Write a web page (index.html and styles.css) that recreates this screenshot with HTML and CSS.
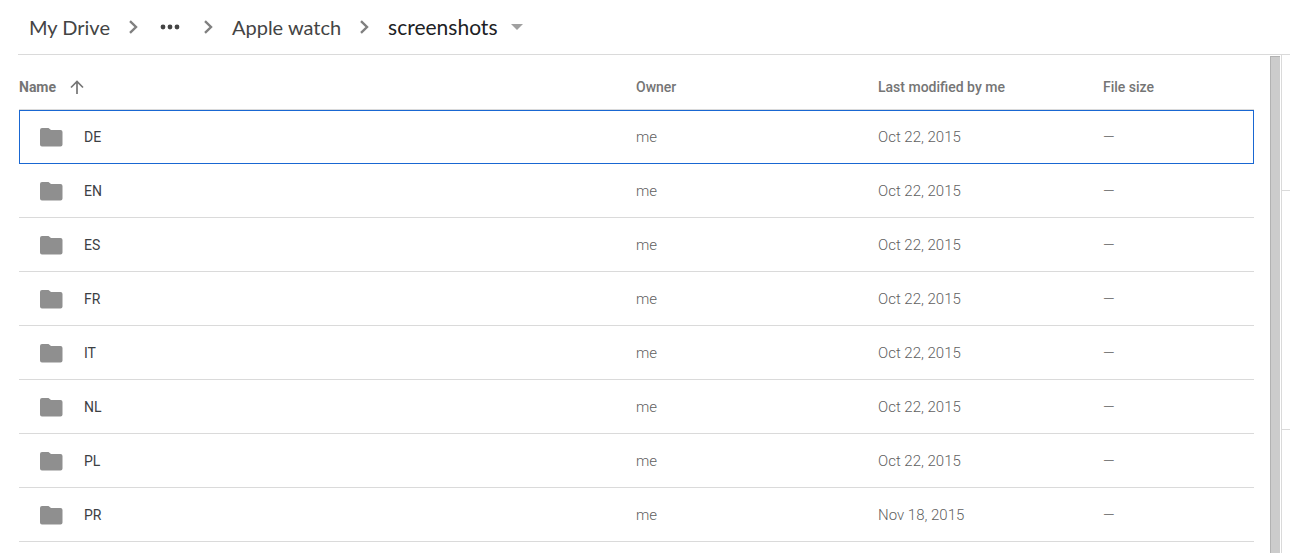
FILE: index.html
```
<!DOCTYPE html>
<html lang="en">
<head>
<meta charset="utf-8">
<title>screenshots - My Drive</title>
<link rel="stylesheet" href="styles.css">
</head>
<body>
<svg class="defs" aria-hidden="true">
  <symbol id="chevron" viewBox="0 0 10 14"><path d="M1 1.200L7 7L1 12.800" fill="none" stroke="currentColor" stroke-width="2.400"/></symbol>
  <symbol id="folder" viewBox="0 0 24 20"><path d="M3 1h6.500l2.500 2h9.500a2 2 0 0 1 2 2v12.500a2 2 0 0 1-2 2h-18.500a2 2 0 0 1-2-2v-14.500a2 2 0 0 1 2-2z" fill="currentColor"/></symbol>
</svg>
<header class="toolbar">
  <nav class="crumbs" aria-label="Breadcrumb">
    <a class="crumb" href="#">My Drive</a>
    <svg class="chevron"><use href="#chevron"/></svg>
    <button class="more" type="button" aria-label="Show path"><svg width="20" height="6" viewBox="0 0 20 6"><circle cx="3" cy="3" r="2.400"/><circle cx="10" cy="3" r="2.400"/><circle cx="17" cy="3" r="2.400"/></svg></button>
    <svg class="chevron"><use href="#chevron"/></svg>
    <a class="crumb" href="#">Apple watch</a>
    <svg class="chevron"><use href="#chevron"/></svg>
    <button class="crumb current" type="button">screenshots<svg class="caret" width="12" height="6" viewBox="0 0 12 6"><path d="M0 0h12l-6 6z" fill="currentColor"/></svg></button>
  </nav>
</header>
<div class="content">
  <main class="list">
    <table class="files">
      <thead>
        <tr>
          <th class="name"><button class="sort" type="button">Name<svg width="14" height="14" viewBox="0 0 14 14"><path d="M7 14V1.500M1 7.500L7 1.500L13 7.500" fill="none" stroke="currentColor" stroke-width="1.700"/></svg></button></th>
          <th class="owner">Owner</th>
          <th class="modified">Last modified by me</th>
          <th class="size">File size</th>
        </tr>
      </thead>
      <tbody>
        <tr class="focused"><td><a class="file" href="#"><svg class="folder"><use href="#folder"/></svg>DE</a></td><td>me</td><td>Oct 22, 2015</td><td>—</td></tr>
        <tr><td><a class="file" href="#"><svg class="folder"><use href="#folder"/></svg>EN</a></td><td>me</td><td>Oct 22, 2015</td><td>—</td></tr>
        <tr><td><a class="file" href="#"><svg class="folder"><use href="#folder"/></svg>ES</a></td><td>me</td><td>Oct 22, 2015</td><td>—</td></tr>
        <tr><td><a class="file" href="#"><svg class="folder"><use href="#folder"/></svg>FR</a></td><td>me</td><td>Oct 22, 2015</td><td>—</td></tr>
        <tr><td><a class="file" href="#"><svg class="folder"><use href="#folder"/></svg>IT</a></td><td>me</td><td>Oct 22, 2015</td><td>—</td></tr>
        <tr><td><a class="file" href="#"><svg class="folder"><use href="#folder"/></svg>NL</a></td><td>me</td><td>Oct 22, 2015</td><td>—</td></tr>
        <tr><td><a class="file" href="#"><svg class="folder"><use href="#folder"/></svg>PL</a></td><td>me</td><td>Oct 22, 2015</td><td>—</td></tr>
        <tr><td><a class="file" href="#"><svg class="folder"><use href="#folder"/></svg>PR</a></td><td>me</td><td>Nov 18, 2015</td><td>—</td></tr>
      </tbody>
    </table>
  </main>
  <div class="scroll-thumb"></div>
  <aside class="details"><div class="section tabs"></div><div class="section preview"></div></aside>
</div>
</body>
</html>
```
FILE: styles.css
```
* { box-sizing: border-box; }
body {
  display: flex;
  flex-direction: column;
  height: 100vh;
  margin: 0;
  overflow: hidden;
  background: #fff;
  color: #3c4043;
  font: 15px/20px Roboto, sans-serif;
}
svg { flex: none; }
a { color: inherit; text-decoration: none; }
button { padding: 0; border: 0; background: none; color: inherit; font: inherit; }
.defs { position: absolute; width: 0; height: 0; }

.toolbar { flex: none; margin-left: 18px; border-bottom: 1px solid #dadada; }
.crumbs { display: flex; align-items: center; height: 54px; padding-left: 11px; }
.crumb { padding-bottom: 1px; font: 20px/24px Lato, sans-serif; color: #444; }
.current { display: flex; align-items: center; gap: 13px; font-size: 21px; color: #202124; }
.caret { color: #a0a0a0; }
.chevron { width: 10px; height: 14px; margin: 0 18px 0 19px; color: #808080; }
.more { display: flex; margin-left: 3px; margin-right: 5px; fill: #444; }

.content { display: flex; flex: 1; min-height: 0; }
.list { flex: 1; min-width: 0; padding: 0 16px 0 19px; overflow: hidden; }
.files { width: 100%; table-layout: fixed; border-spacing: 0; }
th, td { height: 54px; padding: 0; border-bottom: 1px solid #dadada; text-align: left; }
th { height: 55px; padding: 10px 0 0; font-size: 14px; font-weight: 500; color: #757575; }
td { font-weight: 300; color: #5f5f5f; }
.owner { width: 242px; }
.modified { width: 225px; }
.size { width: 151px; }
.sort { display: flex; align-items: center; gap: 14px; font-weight: 700; }
.file { display: flex; align-items: center; gap: 21px; padding-left: 20px; font-size: 14px; font-weight: 400; color: #3c4043; }
.folder { width: 24px; height: 20px; color: #8f8f8f; }
.focused { outline: 1px solid #1967d2; outline-offset: -1px; }
.focused td { border-color: transparent; }

.scroll-thumb { flex: none; width: 10px; margin-top: 1px; border: solid #b2b2b2; border-width: 1px 0 0 1px; background: #ccc; }
.details { flex: none; width: 9px; margin-left: 1px; border-left: 1px solid #dadada; }
.section { border-bottom: 1px solid #dadada; }
.tabs { height: 136px; }
.preview { height: 239px; }
```
